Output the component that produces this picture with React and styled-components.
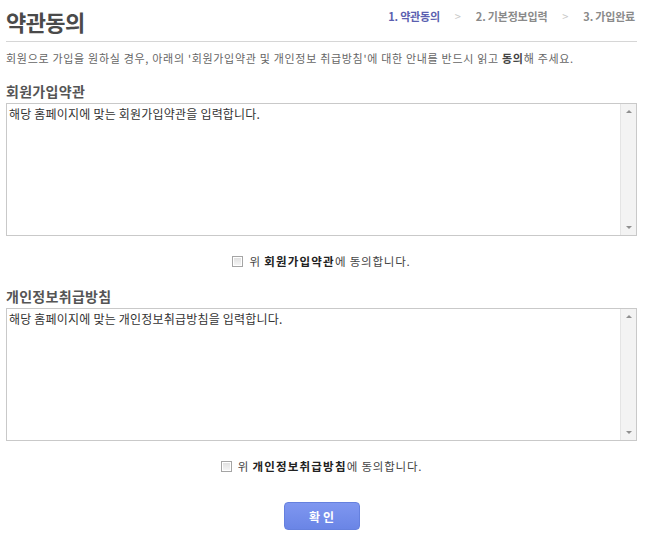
import React from 'react';
import styled, { createGlobalStyle } from 'styled-components';

const font = `"Noto Sans CJK KR", "Noto Sans", sans-serif`;

const GlobalStyle = createGlobalStyle`
  body {
    margin: 0;
    background: #fff;
    font-family: ${font};
  }
`;

const Page = styled.div`
  width: 650px;
  box-sizing: border-box;
  padding: 0 13px 30px 6px;
`;

const Header = styled.div`
  height: 41px;
  display: flex;
  justify-content: space-between;
  align-items: center;
  border-bottom: 1px solid #d6d6d6;
`;

const Title = styled.h1`
  margin: 0;
  font-size: 22px;
  font-weight: 700;
  letter-spacing: -0.6px;
  color: #4a4a4a;
  line-height: 24px;
`;

const Steps = styled.ol`
  display: flex;
  align-items: center;
  list-style: none;
  margin: 0 2px 10px 0;
  padding: 0;
`;

const Step = styled.li`
  font-size: 11px;
  font-weight: 700;
  line-height: 14px;
  letter-spacing: -0.2px;
  color: ${(p) => (p.$active ? '#5b5fb0' : '#8a8a8a')};
`;

const Arrow = styled.li`
  width: 36px;
  text-align: center;
  font-size: 11px;
  line-height: 14px;
  color: #c8c8c8;
`;

const Desc = styled.p`
  margin: 8px 0 0;
  font-size: 11px;
  letter-spacing: 0.7px;
  line-height: 16px;
  color: #666;
  b {
    color: #444;
  }
`;

const Heading = styled.h2`
  margin: ${(p) => (p.$first ? '16px' : '18px')} 0 3px;
  font-size: 14px;
  letter-spacing: 0.3px;
  line-height: 18px;
  font-weight: 700;
  color: #555;
`;

const Box = styled.div`
  height: 133px;
  box-sizing: border-box;
  border: 1px solid #c9c9c9;
  display: flex;
`;

const BoxText = styled.div`
  flex: 1;
  padding: 2px 2px;
  font-size: 12px;
  letter-spacing: 0.2px;
  line-height: 16px;
  color: #333;
`;

const Scrollbar = styled.div`
  width: 15px;
  background: #f3f3f3;
  border-left: 1px solid #e4e4e4;
  display: flex;
  flex-direction: column;
  justify-content: space-between;
  align-items: center;
  padding: 6px 0;
`;

const ArrowUp = styled.span`
  width: 0;
  height: 0;
  border-left: 3px solid transparent;
  border-right: 3px solid transparent;
  border-bottom: 3px solid #8f8f8f;
`;

const ArrowDown = styled.span`
  width: 0;
  height: 0;
  border-left: 3px solid transparent;
  border-right: 3px solid transparent;
  border-top: 3px solid #8f8f8f;
`;

const Agree = styled.label`
  margin-top: 17px;
  display: flex;
  justify-content: center;
  align-items: center;
  gap: 6px;
  font-size: 11.5px;
  letter-spacing: 0.8px;
  line-height: 16px;
  color: #444;
  b {
    color: #222;
    letter-spacing: 1.2px;
  }
`;

const Check = styled.span`
  width: 9px;
  height: 9px;
  border: 1px solid #a5a5a5;
  background: linear-gradient(#dedede, #f7f7f7);
  box-shadow: inset 0 0 0 1px #fff;
`;

const Buttons = styled.div`
  margin-top: 28px;
  display: flex;
  justify-content: center;
`;

const Button = styled.button`
  width: 76px;
  height: 28px;
  border: 1px solid #6580de;
  border-radius: 4px;
  background: linear-gradient(#7f97f0, #6a85e6);
  color: #fff;
  font-family: ${font};
  font-size: 12px;
  font-weight: 700;
  letter-spacing: 3px;
  padding: 0 0 0 3px;
`;

const Terms = ({ title, text, name, first }) => (
  <>
    <Heading $first={first}>{title}</Heading>
    <Box>
      <BoxText>{text}</BoxText>
      <Scrollbar>
        <ArrowUp />
        <ArrowDown />
      </Scrollbar>
    </Box>
    <Agree>
      <Check />
      <span>
        위 <b>{name}</b>에 동의합니다.
      </span>
    </Agree>
  </>
);

export default function App() {
  return (
    <Page>
      <GlobalStyle />
      <Header>
        <Title>약관동의</Title>
        <Steps>
          <Step $active>1. 약관동의</Step>
          <Arrow>&gt;</Arrow>
          <Step>2. 기본정보입력</Step>
          <Arrow>&gt;</Arrow>
          <Step>3. 가입완료</Step>
        </Steps>
      </Header>
      <Desc>
        회원으로 가입을 원하실 경우, 아래의 '회원가입약관 및 개인정보 취급방침'에 대한 안내를 반드시 읽고 <b>동의</b>해 주세요.
      </Desc>
      <Terms
        first
        title="회원가입약관"
        text="해당 홈페이지에 맞는 회원가입약관을 입력합니다."
        name="회원가입약관"
      />
      <Terms
        title="개인정보취급방침"
        text="해당 홈페이지에 맞는 개인정보취급방침을 입력합니다."
        name="개인정보취급방침"
      />
      <Buttons>
        <Button type="button">확인</Button>
      </Buttons>
    </Page>
  );
}
